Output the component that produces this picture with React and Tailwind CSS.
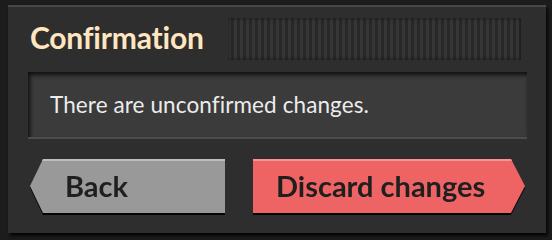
import React from 'react';

const font = { fontFamily: '"Lato", "Open Sans", sans-serif' };

const App = () => {
  return (
    <div className="w-[552px] h-[240px] bg-[#1c1c1c] pt-[5px] pl-[8px]" style={font}>
      <div className="w-[538px] h-[228px] bg-[#2f2e2e] border-t-2 border-[#474747] shadow-[2px_3px_3px_rgba(0,0,0,0.8)] pl-[20px] pr-[19px] pt-[11px] flex flex-col">
        {/* header */}
        <div className="flex items-center h-[42px]">
          <h1 className="pl-[2px] pb-[4px] w-[200px] text-[30px] font-bold text-[#ffe6c0] leading-none tracking-[-0.2px]">
            Confirmation
          </h1>
          <div className="ml-auto mr-[6px] w-[293px] h-[42px] bg-[repeating-linear-gradient(90deg,#383838_0px,#383838_3px,#272727_3px,#272727_6px)] shadow-[inset_0_0_4px_rgba(0,0,0,0.6)] opacity-80" />
        </div>

        {/* message */}
        <div className="mt-[12px] h-[67px] bg-[#3b3b3b] shadow-[inset_2px_3px_4px_rgba(0,0,0,0.75)] border-b-2 border-[#4c4c4c] flex items-center pl-[22px]">
          <p className="text-[22.5px] text-[#ececec] tracking-[0.1px]">There are unconfirmed changes.</p>
        </div>

        {/* buttons */}
        <div className="mt-[20px] flex items-start">
          <div className="ml-[2px] drop-shadow-[0_2px_0_rgba(0,0,0,0.9)]">
            <button className="w-[195px] h-[54px] bg-[#999999] border-t-2 border-[#bdbdbd] [clip-path:polygon(13px_0,100%_0,100%_100%,13px_100%,0_50%)] flex items-center pl-[35px] text-[29px] font-bold text-[#1f1f1f] pb-[2px]">
              Back
            </button>
          </div>
          <div className="ml-[28px] drop-shadow-[0_2px_0_rgba(0,0,0,0.9)]">
            <button className="w-[272px] h-[54px] bg-[#ee6464] border-t-2 border-[#f49494] [clip-path:polygon(0_0,calc(100%-14px)_0,100%_50%,calc(100%-14px)_100%,0_100%)] flex items-center pl-[23px] text-[29px] font-bold text-[#1f1f1f] pb-[2px]">
              Discard changes
            </button>
          </div>
        </div>
      </div>
    </div>
  );
};

export default App;
